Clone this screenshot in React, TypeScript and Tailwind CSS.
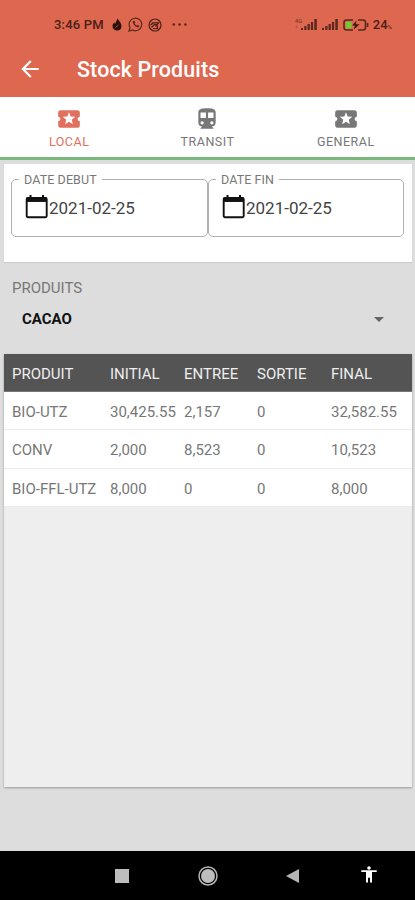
import React from 'react';
import { MdArrowBack, MdArrowDropDown, MdDirectionsSubway, MdLocalPlay } from 'react-icons/md';

interface StockRow {
  produit: string;
  initial: string;
  entree: string;
  sortie: string;
  final: string;
}

const rows: StockRow[] = [
  { produit: 'BIO-UTZ', initial: '30,425.55', entree: '2,157', sortie: '0', final: '32,582.55' },
  { produit: 'CONV', initial: '2,000', entree: '8,523', sortie: '0', final: '10,523' },
  { produit: 'BIO-FFL-UTZ', initial: '8,000', entree: '0', sortie: '0', final: '8,000' }
];

const tabs = [
  { label: 'LOCAL', icon: MdLocalPlay, active: true },
  { label: 'TRANSIT', icon: MdDirectionsSubway, active: false },
  { label: 'GENERAL', icon: MdLocalPlay, active: false }
];

const SignalBars: React.FC = () => (
  <svg className="h-[11px] w-[16px]" viewBox="0 0 16 11" fill="#5a281d">
    <rect x="0" y="9" width="2" height="2" />
    <rect x="3.3" y="7" width="2.2" height="4" />
    <rect x="6.6" y="5" width="2.2" height="6" />
    <rect x="9.9" y="3" width="2.2" height="8" />
    <rect x="13.3" y="0" width="2.5" height="11" />
  </svg>
);

const StatusBar: React.FC = () => (
  <div className="flex h-[49px] items-center pl-[54px] pr-[23px] text-[#4a2017]">
    <span className="w-[51px] whitespace-nowrap text-[13px] font-medium tracking-[0.2px]">3:46 PM</span>
    <svg className="ml-[7px] h-[13px] w-[10px]" viewBox="0 0 10 13" fill="#2b120d">
      <path d="M5.3.5C7 3 9.5 5 9.5 8.2A4.5 4.5 0 0 1 5 12.5 4.4 4.4 0 0 1 .5 8.2C.5 6.6 1.4 5.5 2.3 4.6L3.2 6C3.7 4 5 2.5 5.3.5Z" />
      <path d="M3.5 9.5 6.5 7" stroke="#de6750" strokeWidth="0.7" />
    </svg>
    <svg className="ml-[6px] h-[15px] w-[15px]" viewBox="0 0 15 15" fill="none" stroke="#5a281d" strokeWidth="1.2">
      <path d="M1 14 2 10.6A6.3 6.3 0 1 1 4.5 13Z" />
      <path d="M5 4.2C4.6 7 7.5 10.5 10.7 10.1L11.2 8.8 9.4 7.9 8.6 8.7C7.6 8.3 6.9 7.5 6.5 6.6L7.2 5.8 6.4 4Z" fill="#5a281d" strokeWidth="0.3" />
    </svg>
    <svg className="ml-[5px] h-[14px] w-[14px]" viewBox="0 0 14 14" fill="none" stroke="#4a2017" strokeWidth="1.2">
      <circle cx="7" cy="7" r="6" />
      <path d="M3.5 4.8H10.5L7.5 8.5M3.5 9.5 6.5 6.5H9M5 10.5H9.5V7.5M2.5 7.2 5.5 4.8" />
    </svg>
    <svg className="ml-[10px] h-[3px] w-[16px]" viewBox="0 0 16 3" fill="#5a281d">
      <circle cx="1.8" cy="1.5" r="1.3" />
      <circle cx="7.6" cy="1.5" r="1.3" />
      <circle cx="13.4" cy="1.5" r="1.3" />
    </svg>
    <div className="ml-auto flex items-center">
      <div className="flex h-[14px] w-[6px] flex-col text-[6px] leading-[6px] text-[#6f3226]">
        <span>4G</span>
        <span>↑</span>
      </div>
      <SignalBars />
      <div className="w-[5px]" />
      <SignalBars />
      <svg className="ml-[5px] h-[12px] w-[26px]" viewBox="0 0 26 12" fill="none" stroke="#5a281d" strokeWidth="1.6">
        <path d="M10 1H3.5Q1 1 1 3.5V8.5Q1 11 3.5 11H10M15 1H20Q22.5 1 22.5 3.5V8.5Q22.5 11 20 11H15" />
        <rect x="3" y="2.8" width="5.5" height="6.5" fill="#71cb2c" stroke="none" />
        <path d="M13.5 1.5 9 6.5H11.8L11 10.5 16.5 5.2H12.8Z" fill="#3b1a12" stroke="none" />
        <path d="M24.6 4V8" />
      </svg>
      <span className="ml-[4px] text-[13px] font-medium leading-none">24</span>
      <span className="mt-[4px] text-[6px] leading-none">%</span>
    </div>
  </div>
);

const CalendarIcon: React.FC = () => (
  <svg className="h-[25px] w-[23px] shrink-0" viewBox="0 0 23 25" fill="none" stroke="#111">
    <rect x="1.7" y="4" width="20" height="19.3" rx="1.2" strokeWidth="1.9" />
    <path d="M1.5 5.7H22" strokeWidth="4.5" />
    <path d="M5.5 1V5M18 1V5" strokeWidth="2" />
  </svg>
);

const DateField: React.FC<{ label: string; value: string; width: string }> = ({ label, value, width }) => (
  <fieldset className={`h-[66px] rounded-[5px] border border-[#b0b0b0] pl-[4px] ${width}`}>
    <legend className="ml-[3px] px-[5px] text-[12.5px] leading-[16px] tracking-[0.1px] text-[#777]">
      <span className="relative top-px">{label}</span>
    </legend>
    <div className="flex items-center pl-[9px] pt-[7px]">
      <CalendarIcon />
      <span className="ml-px mt-[2px] text-[17px] leading-[22px] text-[#444]">{value}</span>
    </div>
  </fieldset>
);

const App: React.FC = () => {
  return (
    <div className="flex h-[900px] w-[415px] flex-col overflow-hidden bg-[#ddd] font-['Roboto',sans-serif]">
      <header className="h-[97px] shrink-0 bg-[#de6750]">
        <StatusBar />
        <div className="flex h-[40px] items-center pl-[17px]">
          <MdArrowBack className="-mt-px h-[26px] w-[26px] text-white" />
          <h1 className="ml-[34px] mt-[2px] text-[21.5px] font-medium tracking-[0.1px] text-white">Stock Produits</h1>
        </div>
      </header>

      <nav className="grid h-[63px] shrink-0 grid-cols-3 border-b-[3px] border-[#78b87a] bg-white">
        {tabs.map((tab) => {
          const Icon = tab.icon;

          return (
            <div
              key={tab.label}
              className={`flex flex-col items-center pt-[9px] ${tab.active ? 'text-[#e1705e]' : 'text-[#777]'}`}
            >
              <Icon className="h-[26px] w-[26px]" />
              <span className="mt-[2px] text-[12.5px] leading-[16px] tracking-[0.5px]">{tab.label}</span>
            </div>
          );
        })}
      </nav>

      <section className="mx-[4px] mt-[4px] flex h-[98px] w-[408px] shrink-0 bg-white pl-[7px] pt-[7px] shadow-[0_1px_1px_#ccc]">
        <DateField label="DATE DEBUT" value="2021-02-25" width="w-[197px]" />
        <DateField label="DATE FIN" value="2021-02-25" width="w-[196px]" />
      </section>

      <section className="h-[92px] shrink-0 pl-[12px] pr-[24px] pt-[16px]">
        <p className="text-[15px] leading-[20px] text-[#777]">PRODUITS</p>
        <div className="mt-[11px] flex h-[20px] items-center justify-between pl-[10px]">
          <span className="text-[15px] font-bold leading-[20px] text-[#111]">CACAO</span>
          <MdArrowDropDown className="h-[24px] w-[24px] text-[#666]" />
        </div>
      </section>

      <section className="mx-[4px] h-[433px] w-[408px] shrink-0 bg-[#eee] shadow-[0_1px_2px_#999]">
        <div className="grid h-[38px] grid-cols-[98px_74px_73px_74px_1fr] items-center border-b border-[#777] bg-[#545454] pl-[8px] pt-[3px] text-[15px] text-[#eee]">
          <span>PRODUIT</span>
          <span>INITIAL</span>
          <span>ENTREE</span>
          <span>SORTIE</span>
          <span>FINAL</span>
        </div>
        {rows.map((row) => (
          <div
            key={row.produit}
            className="grid h-[38.4px] grid-cols-[98px_74px_73px_74px_1fr] items-center border-b border-[#ececec] bg-white pl-[8px] pt-[3px] text-[15px] text-[#777]"
          >
            <span className="whitespace-nowrap">{row.produit}</span>
            <span>{row.initial}</span>
            <span>{row.entree}</span>
            <span>{row.sortie}</span>
            <span>{row.final}</span>
          </div>
        ))}
      </section>

      <footer className="mt-auto flex h-[49px] shrink-0 items-center bg-black pl-[115px]">
        <div className="h-[14px] w-[14px] bg-[#bdbdbd]" />
        <svg className="ml-[69px] h-[20px] w-[20px]" viewBox="0 0 20 20" fill="none" stroke="#b5b5b5">
          <circle cx="10" cy="10" r="9" strokeWidth="1.5" />
          <circle cx="10" cy="10" r="7" fill="#bdbdbd" stroke="none" />
        </svg>
        <svg className="ml-[68px] h-[14px] w-[13px]" viewBox="0 0 13 14" fill="#b5b5b5">
          <path d="M0 7 13 0V14Z" />
        </svg>
        <svg className="-mt-[2px] ml-[62px] h-[17px] w-[16px]" viewBox="0 0 16 17" fill="#fff">
          <circle cx="8" cy="2" r="1.8" />
          <path d="M.3 4.3H15.7V6.1H11V16.5H9V11.8H7V16.5H5V6.1H.3Z" />
        </svg>
      </footer>
    </div>
  );
};

export default App;
